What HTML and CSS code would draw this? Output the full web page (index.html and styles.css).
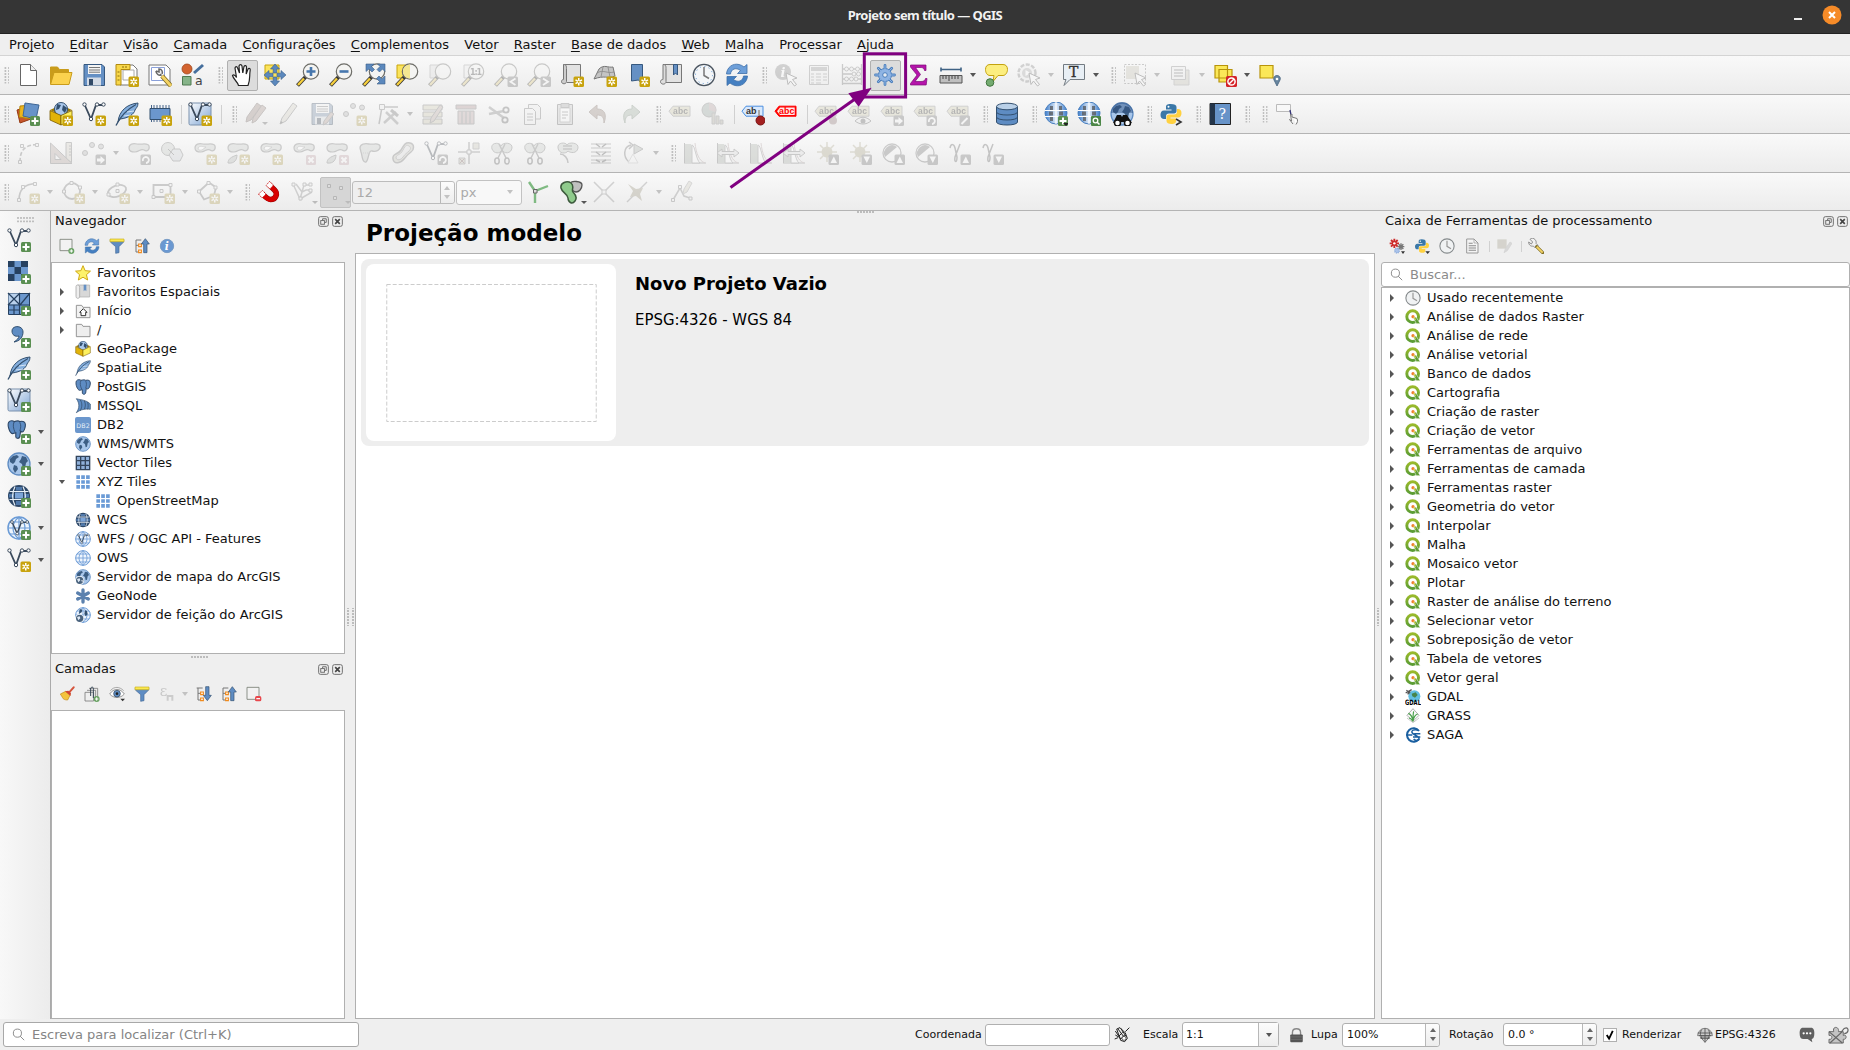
FILE: index.html
```html
<!DOCTYPE html>
<html lang="pt-BR">
<head>
<meta charset="utf-8">
<title>Projeto sem título — QGIS</title>
<link rel="stylesheet" href="styles.css">
</head>
<body>
<svg class="defs" aria-hidden="true">
<defs>
<linearGradient id="gy" x1="0" y1="0" x2="0" y2="1"><stop offset="0" stop-color="#9aba2c"/><stop offset="1" stop-color="#5a9c34"/></linearGradient>
<linearGradient id="gb" x1="0" y1="0" x2="1" y2="1"><stop offset="0" stop-color="#fff"/><stop offset="1" stop-color="#7fa5d4"/></linearGradient>
<linearGradient id="gg" x1="0" x2="1"><stop offset="0" stop-color="#3d7cc9"/><stop offset=".5" stop-color="#e4eefa"/><stop offset="1" stop-color="#3d7cc9"/></linearGradient>
<g id="b-new"><rect x="13.5" y="13.5" width="10.5" height="10.5" rx="1.5" fill="#c8a30e"/><path d="M18.750 15v7.500M15.500 16.900l6.500 3.700M15.500 20.600l6.500-3.700" stroke="#fff" stroke-width="1.500"/><circle cx="18.750" cy="18.750" r="1" fill="#c8a30e"/></g>
<g id="b-add"><rect x="14" y="14" width="10" height="10" rx="1.500" fill="#5a8f52"/><path d="M19 15.500v7M15.500 19h7" stroke="#fff" stroke-width="2"/></g>
<g id="b-del"><rect x="14" y="14" width="10" height="10" rx="1.500" fill="#d8a0aa"/><path d="M16.500 16.500l5 5M21.500 16.500l-5 5" stroke="#fff" stroke-width="2"/></g>
<g id="b-sq"><rect x="13.500" y="13.500" width="10.500" height="10.500" rx="1.500" fill="#777"/></g>
<g id="b-right"><use href="#b-sq"/><path d="M15 17.500h3.500v-2.500l4.500 4-4.500 4v-2.500h-3.500z" fill="#fff"/></g>
<g id="b-rot"><use href="#b-sq"/><path d="M16 20a3 3 0 1 1 3 2" fill="none" stroke="#fff" stroke-width="1.800"/></g>
<g id="b-up"><use href="#b-sq"/><path d="M15.500 22l3.300-6.500 3.200 6.500z" fill="#fff"/></g>
<g id="b-down"><use href="#b-sq"/><path d="M15.500 15.500l3.300 6.500 3.200-6.500z" fill="#fff"/></g>
<g id="lens"><path d="M9.500 14l-8 8.500" stroke="#333" stroke-width="4"/><path d="M8 15.500l-6 6.500" stroke="#f6cf3d" stroke-width="2.400"/><circle cx="15" cy="8.500" r="7.700" fill="#f4f4f2" fill-opacity=".9" stroke="#6d6d68" stroke-width="1.200"/></g>
<g id="nodes-v"><path d="M2.500 2.500L9 17l5-14h7" fill="none" stroke="#3b4a5c" stroke-width="1.800"/><g fill="#fff" stroke="#3b4a5c"><circle cx="2.500" cy="2.500" r="1.700"/><circle cx="9" cy="17" r="1.700"/><circle cx="15" cy="2.500" r="1.700"/><circle cx="21.500" cy="2.500" r="1.700"/></g></g>
<g id="globe"><circle cx="12" cy="12" r="11" fill="#a8c6ea" stroke="#5f8cc2" stroke-width="1.300"/><path d="M3 7l3-3 4-1 2 2-3 2-1 3-2 2-3-2zM15 4l4 1 2 4-2 2-1 5-2 1-1-5-3-2 2-3zM7 13l3 1 1 3-3 4-2-4z" fill="#3c5e84"/></g>
<g id="globe-lines"><circle cx="12" cy="12" r="11" fill="#eef5fd" stroke="#6b9bd6" stroke-width="1.500"/><path d="M1 12h22M3 6h18M3 18h18M12 1v22M12 1c-8 6-8 16 0 22c8-6 8-16 0-22" fill="none" stroke="#6b9bd6" stroke-width="1.200"/></g>
<g id="globe-dark"><circle cx="12" cy="12" r="11" fill="#2d4767"/><path d="M8 8.500h8v6H8z" fill="#7ba4d8"/><path d="M2 10h5v3.500H2zM17 10h5v3.500h-5zM9 3h6v3.500H9zM9 17h6v4H9z" fill="#5079ab"/><path d="M2.500 7.500h19M2.500 15.500h19M8 2.500c-3 6-3 13 0 19M16 2.500c3 6 3 13 0 19" fill="none" stroke="#e8f0f8" stroke-width="1.200"/></g>
<g id="tag"><path d="M1 9.200l4-5h17v10H5z"/></g>
<g id="blob"><path d="M2 7c0-4 4-5 8-4s11-2 12 2-2 6-5 4-5 2-9 2-6-1-6-4z" fill="#c5cdc5" stroke="#777" stroke-width="1.200"/></g>
<g id="cursor"><path d="M12 10l11 5-4.500 1.500 4 5-2 1.500-4-5-2.500 3.500z" fill="#fff" stroke="#555"/></g>

<symbol id="new" viewBox="0 0 24 24"><path d="M4.500 1.500h10l6 6v15h-16z" fill="#fff" stroke="#666"/><path d="M14.500 1.500v6h6" fill="#eee" stroke="#666"/></symbol>
<symbol id="open" viewBox="0 0 24 24"><path d="M1.500 21V4h7l2 2.500h9V9" fill="#c99c1b" stroke="#c99c1b"/><path d="M1.500 21.500l3.500-12h18l-3 12z" fill="#fbd24e" stroke="#c99c1b"/></symbol>
<symbol id="save" viewBox="0 0 24 24"><path d="M2 1.500h18l2.500 2.500v18.500H2z" fill="#6590c4" stroke="#36587f"/><path d="M6 2h13v9H6z" fill="#f4f4f4"/><path d="M7 4.500h11M7 7h11M7 9.200h11" stroke="#777"/><path d="M5 14.500h14v8H5z" fill="#d5dce6"/><path d="M7 16h4v6H7z" fill="#324a67"/></symbol>
<symbol id="layout" viewBox="0 0 24 24"><path d="M5 2h13l4 4v16H5z" fill="#fff" stroke="#777"/><path d="M8 7h11v10H8z" fill="none" stroke="#aaa"/><path d="M1 1.500h14v5H6V22H1z" fill="#f8d749" stroke="#b18a10"/><path d="M8 3v2M11 3v2M2.500 9h2M2.500 13h2M2.500 17h2" stroke="#8a6d10"/><use href="#b-new"/></symbol>
<symbol id="layoutm" viewBox="0 0 24 24"><path d="M1 2h17l4 4v16H1z" fill="#fff" stroke="#777"/><path d="M3.500 4.500h13v13h-13z" fill="none" stroke="#8aa0da"/><path d="M8 8c0 3 3 5 5 4l-1-1M8 8l3 1V6c3 0 4 3 3 5" fill="#eee" stroke="#666" stroke-width="1.500"/><path d="M14 13l9 10" stroke="#776622" stroke-width="4.500"/><path d="M14 13l9 10" stroke="#f3d264" stroke-width="3"/></symbol>
<symbol id="style" viewBox="0 0 24 24"><circle cx="6" cy="6" r="5" fill="#d3632f" stroke="#a0461c" stroke-width=".8"/><path d="M13 10l9-8" stroke="#466f9d" stroke-width="3"/><path d="M1.500 13.500h8.500v8.500H1.500z" fill="#86b489" stroke="#4e7a51"/><text x="14" y="21.500" font-family="DejaVu Sans" font-size="12.500" fill="#444">a</text></symbol>
<symbol id="hand" viewBox="0 0 24 24"><path d="M8.500 22.500c-1-4-5-6-6-10 1-1.500 3 0 4 2L5 5c.5-1.800 2-1.800 2.600 0L9.500 10 9 3c.5-1.800 2.500-1.800 3 0l.8 7L14 3.500c.8-1.500 2.500-1 2.500.5L16.200 11l1.800-5c1-1.200 2.500-.5 2.200 1-1 6 .3 10-2.200 15.500z" fill="#fff" stroke="#222" stroke-width="1.200"/></symbol>
<symbol id="move" viewBox="0 0 24 24"><path d="M2 2h14v14H2z" fill="#fbe45c" stroke="#c9a50c"/><g fill="#5b88bd" stroke="#3c5f88" stroke-width=".6"><path d="M12 1l4.500 5h-2.700v4h-3.600V6H7.500z"/><path d="M12 23l4.500-5h-2.700v-4h-3.600v4H7.500z"/><path d="M1 12l5-4.500v2.700h4v3.600H6v2.700z"/><path d="M23 12l-5-4.500v2.700h-4v3.600h4v2.700z"/></g></symbol>
<symbol id="zin" viewBox="0 0 24 24"><use href="#lens"/><path d="M15 4v9M10.500 8.500h9" stroke="#4777ad" stroke-width="2.600"/></symbol>
<symbol id="zout" viewBox="0 0 24 24"><use href="#lens"/><path d="M10.500 8.500h9" stroke="#4777ad" stroke-width="2.600"/></symbol>
<symbol id="zfull" viewBox="0 0 24 24"><use href="#lens"/><g fill="#5b88bd" stroke="#3c5f88" stroke-width=".6"><path d="M4 1h8l-2.500 2.500 3 3-2.500 2.500-3-3L4 8.500z"/><path d="M23 1h-7.500l2.500 2.500-3 3 2.500 2.500 3-3L23 8.500z"/><path d="M23 21h-8l2.500-2.500-3-3 2.500-2.500 3 3L23 13z"/></g></symbol>
<symbol id="zsel" viewBox="0 0 24 24"><path d="M2 2h12v13H2z" fill="#fbe45c" stroke="#c9a50c"/><use href="#lens"/><path d="M15 1.500a7 7 0 0 0 0 14z" fill="#f3e690"/></symbol>
<symbol id="zlay" viewBox="0 0 24 24"><path d="M2 2h9v13H2z" fill="#ddd" stroke="#999"/><use href="#lens"/></symbol>
<symbol id="z11" viewBox="0 0 24 24"><path d="M3 2h9v13H3z" fill="#eee" stroke="#999"/><use href="#lens"/><text x="9" y="12" font-family="DejaVu Sans" font-weight="bold" font-size="8" textLength="12" fill="#444">1:1</text></symbol>
<symbol id="zlast" viewBox="0 0 24 24"><use href="#lens"/><use href="#b-sq"/><path d="M21.500 15.500l-5 3.300 5 3.200" fill="none" stroke="#fff" stroke-width="1.800"/></symbol>
<symbol id="znext" viewBox="0 0 24 24"><use href="#lens"/><use href="#b-sq"/><path d="M16 15.500l5 3.300-5 3.200" fill="none" stroke="#fff" stroke-width="1.800"/></symbol>
<symbol id="map" viewBox="0 0 24 24"><path d="M3.500 1.500h17v18H7" fill="#e2e2e2" stroke="#777"/><path d="M3.500 1.500c3 0 3 2 3 4v13c0 3-5 3-5 0 0-2 2-2 2-2z" fill="#ccc" stroke="#777"/><use href="#b-new"/></symbol>
<symbol id="map3d" viewBox="0 0 24 24"><path d="M6 6c5-5 9-1 14-2l2 9c-7 3-11-1-21 3z" fill="#c4c4c4" stroke="#777"/><path d="M4 10c6-4 10 1 17-1M10 4L8 14M15 4l2 10" fill="none" stroke="#888" stroke-width=".8"/><use href="#b-new"/></symbol>
<symbol id="bmnew" viewBox="0 0 24 24"><path d="M5.500 1.500h11v20l-4-4.500-7 1z" fill="#6590c4" stroke="#36587f"/><use href="#b-new"/></symbol>
<symbol id="bm" viewBox="0 0 24 24"><path d="M4 1.500h18.500v18H7" fill="#e2e2e2" stroke="#777"/><path d="M4 1.500c3 0 3 2 3 4v13c0 3.500-5.500 3.500-5.500 0 0-2 2.500-2 2.500-2z" fill="#ddd" stroke="#777"/><path d="M14.500 1.500h4V12l-2-2-2 2z" fill="#6590c4" stroke="#36587f"/></symbol>
<symbol id="clock" viewBox="0 0 24 24"><circle cx="12" cy="12" r="10.700" fill="#f4f6f8" stroke="#4b5560" stroke-width="1.300"/><circle cx="12" cy="12" r="8.500" fill="none" stroke="#6da0d5" stroke-dasharray="1.200 3.250"/><path d="M12 4v8.500l5 3" fill="none" stroke="#777" stroke-width="1.500"/></symbol>
<symbol id="clockg" viewBox="0 0 24 24"><circle cx="12" cy="12" r="10.700" fill="#f0f2f3" stroke="#858a8c" stroke-width="1.600"/><path d="M12 4v8.500l6 3.500" fill="none" stroke="#999" stroke-width="1.800"/></symbol>
<symbol id="refresh" viewBox="0 0 24 24"><path d="M1.500 11C2 4 8 0 14 1.500c2 .5 3.500 1.200 5 2.500l3-2.500v9h-9.500l3-3C11 4 6 6 5.500 11z" fill="#6d9fd9" stroke="#3e6fa8" stroke-width=".8"/><path d="M22.500 13C22 20 16 24 10 22.500c-2-.5-3.500-1.200-5-2.500l-3 2.500v-9h9.500l-3 3C13 20 18 18 18.500 13z" fill="#4580c2" stroke="#3e6fa8" stroke-width=".8"/></symbol>
<symbol id="ident" viewBox="0 0 24 24"><circle cx="9" cy="9" r="8" fill="#888"/><text x="6.500" y="14" font-family="DejaVu Serif" font-weight="bold" font-style="italic" font-size="13" fill="#fff">i</text><use href="#cursor"/></symbol>
<symbol id="table" viewBox="0 0 24 24"><path d="M2.500 2.500h19v19h-19z" fill="#eee" stroke="#888"/><path d="M4 4h16v4H4z" fill="#999"/><path d="M4 11h3M9 11h5M16 11h4M4 14h3M9 14h5M16 14h4M4 17h3M9 17h5M16 17h4M4 20h3M9 20h5" stroke="#888"/></symbol>
<symbol id="abacus" viewBox="0 0 24 24"><path d="M2.500 1v21M21.500 1v21M2 20.500h20M3 6h18M3 11h18M3 16h18" fill="none" stroke="#777" stroke-width="1.300"/><g fill="#eee" stroke="#777"><circle cx="6.500" cy="6" r="2"/><circle cx="11.500" cy="6" r="2"/><circle cx="17.500" cy="6" r="2"/><circle cx="14" cy="11" r="2"/><circle cx="18.500" cy="11" r="2"/><circle cx="6.500" cy="16" r="2"/><circle cx="11.500" cy="16" r="2"/><circle cx="16" cy="16" r="2"/></g></symbol>
<symbol id="gear" viewBox="0 0 24 24"><g stroke="#4d80bd" stroke-width="2.800" stroke-linecap="round"><path d="M12 2.500v19M2.500 12h19M5.300 5.300l13.400 13.400M18.700 5.300L5.300 18.700"/></g><circle cx="12" cy="12" r="6.500" fill="#8fb4e3" stroke="#4d80bd"/><g stroke="#8fb4e3" stroke-width="1" stroke-linecap="round"><path d="M12 2.500v19M2.500 12h19M5.300 5.300l13.400 13.400M18.700 5.300L5.300 18.700"/></g><circle cx="12" cy="12" r="2.300" fill="#e6ebf1" stroke="#4d80bd"/></symbol>
<symbol id="sum" viewBox="0 0 24 24"><path d="M4.500 2h15.500v5.500h-1.500C18 5 17 4.500 14 4.500H9.500l5 7-5.500 7h6c3 0 4-1 4.500-3H21l-.8 6.500H4.500v-1.500l6.500-8.500-6.500-8z" fill="#b514ab" stroke="#7d0877" stroke-width=".7"/></symbol>
<symbol id="ruler" viewBox="0 0 24 24"><path d="M2 6.500h20M2 4.500v4M22 4.500v4" stroke="#3f6284" stroke-width="1.600"/><path d="M1 12.500h22v7.500H1z" fill="#bfbfbf" stroke="#555"/><path d="M4 13v3M7 13v3M10 13v5M13 13v3M16 13v3M19 13v3" stroke="#444"/></symbol>
<symbol id="tip" viewBox="0 0 24 24"><path d="M6 1.500h13c3 0 4.500 2 4.500 5s-2 6-4.500 6h-5l-5 6 1-6H6c-3 0-4.500-3-4.500-6s1.500-5 4.500-5z" fill="#fcee7f" stroke="#c3a20f"/><circle cx="6" cy="19.500" r="3.800" fill="#74ab70" stroke="#41753f"/></symbol>
<symbol id="gearact" viewBox="0 0 24 24"><circle cx="10" cy="10" r="8.500" fill="#eee" stroke="#888" stroke-width="2.400" stroke-dasharray="4 1.500"/><circle cx="10" cy="10" r="5" fill="#aaa"/><path d="M8.500 7l5 3-5 3z" fill="#fff"/><use href="#cursor"/></symbol>
<symbol id="textann" viewBox="0 0 24 24"><path d="M1.500 1.500h21v15H8l-6 6 2-6H1.500z" fill="#e8eff5" stroke="#737b82"/><text x="7" y="14" font-family="DejaVu Serif" font-size="14" fill="#333" stroke="#333" stroke-width=".4">T</text></symbol>
<symbol id="select" viewBox="0 0 24 24"><path d="M1.500 1.500h21v19h-21z" fill="none" stroke="#777" stroke-dasharray="2 1.500"/><path d="M3 3h13v13H3z" fill="#c9c3a8"/><use href="#cursor"/></symbol>
<symbol id="form" viewBox="0 0 24 24"><path d="M6 7h15v15H6z" fill="#ccc7b0" stroke="#999"/><path d="M3.500 3.500h14v13h-14z" fill="#eee" stroke="#888"/><path d="M6 7h9M6 10h9M6 13h9" stroke="#888" stroke-width="1.300"/></symbol>
<symbol id="desel" viewBox="0 0 24 24"><path d="M2 2.500h12.500V15H2zM6 6.500h13V19H6z" fill="#fbe858" stroke="#b8940b" stroke-width="1.200"/><rect x="13" y="13" width="11" height="11" rx="1.500" fill="#d42328"/><circle cx="18.500" cy="18.500" r="3.600" fill="none" stroke="#fff" stroke-width="1.500"/><path d="M16 21l5-5" stroke="#fff" stroke-width="1.500"/></symbol>
<symbol id="selloc" viewBox="0 0 24 24"><path d="M2 2.500h13V15H2z" fill="#fbe858" stroke="#b8940b" stroke-width="1.200"/><path d="M19 23l-3-6c-1-3 1-4.500 3-4.500s4 1.500 3 4.500z" fill="#67859f" stroke="#45627d" stroke-width=".8"/><circle cx="19" cy="16" r="1.300" fill="#fff"/></symbol>

<symbol id="dsm" viewBox="0 0 24 24"><path d="M1 8l11-3 3 12-11 4z" fill="#c7562c" stroke="#96380f"/><path d="M4 4l12-1-1 14-12-2z" fill="#edb51d" stroke="#b1830c"/><path d="M9 1l14 2-3 14-13-3z" fill="#6793c8" stroke="#3f6695"/><use href="#b-add"/></symbol>
<symbol id="gpkg" viewBox="0 0 24 24"><path d="M1 8l11-5 11 5-11 5z" fill="#a07c05"/><circle cx="12" cy="7" r="6.500" fill="#aac8ec" stroke="#33506f"/><path d="M8 2l4 1-2 4-3 1zM14 3l4 3-2 5-3-3z" fill="#33506f"/><path d="M1 8.500l11 5V23L1 18z" fill="#e1b309" stroke="#7a5c00" stroke-width=".8"/><path d="M23 8.500l-11 5V23l11-5z" fill="#fdf05e" stroke="#7a5c00" stroke-width=".8"/></symbol>
<symbol id="gpkgn" viewBox="0 0 24 24"><use href="#gpkg"/><use href="#b-new"/></symbol>
<symbol id="shpn" viewBox="0 0 24 24"><use href="#nodes-v"/><use href="#b-new"/></symbol>
<symbol id="shpa" viewBox="0 0 24 24"><use href="#nodes-v"/><use href="#b-add"/></symbol>
<symbol id="feather" viewBox="0 0 24 24"><path d="M3 20C4 9 12 2 23 1c0 4-2 5-3 7-1 4-6 8-15 9z" fill="#84aedd" stroke="#33506f"/><path d="M1 23.500C5 15 11 8 21 2.500" fill="none" stroke="#33506f" stroke-width="1.300"/><path d="M9 14l7-1M12 10l7-1" stroke="#d5e4f5"/></symbol>
<symbol id="feathern" viewBox="0 0 24 24"><use href="#feather"/><use href="#b-new"/></symbol>
<symbol id="feathera" viewBox="0 0 24 24"><use href="#feather"/><use href="#b-add"/></symbol>
<symbol id="chip" viewBox="0 0 24 24"><path d="M6 3v17M9 3v17M12 3v17M15 3v17M18 3v17M21 3v17M3.500 3v17" stroke="#46648a" stroke-width="1"/><path d="M2 6.500h20v11H2z" fill="#6b97cd" stroke="#33506f"/><use href="#b-new"/></symbol>
<symbol id="virt" viewBox="0 0 24 24"><rect x="1" y="1" width="22" height="22" rx="1.500" fill="url(#gb)" stroke="#7a91ad"/><g><use href="#nodes-v"/></g></symbol>
<symbol id="virtn" viewBox="0 0 24 24"><use href="#virt"/><use href="#b-new"/></symbol>
<symbol id="virta" viewBox="0 0 24 24"><use href="#virt"/><use href="#b-add"/></symbol>
<symbol id="pencils" viewBox="0 0 24 24"><path d="M2 20l1-5L13 1l4 3L7 18z" fill="#a98678" stroke="#7c655d"/><path d="M8 21l1-5L18 3l4 3-10 13z" fill="#b99384" stroke="#7c655d"/><path d="M18 20h6l-3 3z" fill="#666"/></symbol>
<symbol id="pencil" viewBox="0 0 24 24"><path d="M3 22l2-6L16 1l4 3L9 19z" fill="#d9d2bd" stroke="#777"/><path d="M3 22l1-3 2 1.500z" fill="#555"/></symbol>
<symbol id="saveed" viewBox="0 0 24 24"><use href="#save"/><path d="M13 23l1-4 7-9 3 2-7 9z" fill="#c79f90" stroke="#777"/></symbol>
<symbol id="pts" viewBox="0 0 24 24"><g fill="#bbb" stroke="#777"><circle cx="3" cy="12" r="2.500"/><circle cx="10" cy="4" r="2.500"/><circle cx="19" cy="5.500" r="2.500"/></g></symbol>
<symbol id="ptsn" viewBox="0 0 24 24"><use href="#pts"/><use href="#b-new"/></symbol>
<symbol id="ptsm" viewBox="0 0 24 24"><use href="#pts"/><use href="#b-right"/></symbol>
<symbol id="vertex" viewBox="0 0 24 24"><path d="M3 22L6 5h16" fill="none" stroke="#777" stroke-width="1.500"/><path d="M3.500 2.500h5v5h-5z" fill="#eee" stroke="#777"/><path d="M10 10l12 12M20 10L8 21" stroke="#888" stroke-width="2.500"/><path d="M15 8l7 6" stroke="#777" stroke-width="3"/></symbol>
<symbol id="attr" viewBox="0 0 24 24"><path d="M2 3h19v5H2zM2 10h19v5H2zM2 17h19v5H2z" fill="#d3cc9d" stroke="#777"/><path d="M9 21l1-5 9-13 3 2-9 14z" fill="#c7a99e" stroke="#777"/></symbol>
<symbol id="trash" viewBox="0 0 24 24"><path d="M2 3h20v4H2z" fill="#c08f8f" stroke="#777"/><path d="M4 9h16v13H4z" fill="#cfa5a5" stroke="#777"/><path d="M8 9v13M12 9v13M16 9v13" stroke="#888" stroke-width="1.500"/></symbol>
<symbol id="cut" viewBox="0 0 24 24"><path d="M2 5l15 11M2 12l15-3" stroke="#888" stroke-width="2.500"/><g fill="none" stroke="#666" stroke-width="1.800"><circle cx="19" cy="8" r="2.700"/><circle cx="18" cy="18" r="2.700"/></g></symbol>
<symbol id="copy" viewBox="0 0 24 24"><path d="M8.500 2.500h9l3 3V17h-12z" fill="#eee" stroke="#777"/><path d="M4.500 6.500h8l3 3v13h-11z" fill="#f4f4f4" stroke="#777"/><path d="M7 12h6M7 15h6M7 18h6" stroke="#777"/></symbol>
<symbol id="paste" viewBox="0 0 24 24"><path d="M4.500 2.500h15v20h-15z" fill="#ccc" stroke="#666"/><path d="M7 6h10v14H7z" fill="#fff" stroke="#999"/><path d="M8 1.500h8v4H8z" fill="#aaa" stroke="#777"/><path d="M9 10h6M9 13h6M9 16h4" stroke="#777"/></symbol>
<symbol id="undo" viewBox="0 0 24 24"><path d="M3 10l8-7v4c8 0 10 6 7 14 0-6-2-8-7-8v4z" fill="#a88876" stroke="#8a6a58"/></symbol>
<symbol id="redo" viewBox="0 0 24 24"><path d="M21 10l-8-7v4c-8 0-10 6-7 14 0-6 2-8 7-8v4z" fill="#9ab59a" stroke="#729072"/></symbol>
<symbol id="abc" viewBox="0 0 24 24"><g fill="#d6cd92" stroke="#888"><use href="#tag"/></g><text x="5" y="12.200" font-family="Liberation Sans" font-weight="bold" font-size="8.500" textLength="15" fill="#333">abc</text></symbol>
<symbol id="abcr" viewBox="0 0 24 24"><g fill="#f00" stroke="#f00"><use href="#tag"/></g><path d="M3 9.200l3-3.700h14.700v7.500H6z" fill="#ffeaea"/><text x="5" y="12.300" font-family="Liberation Sans" font-weight="bold" font-size="8.800" textLength="15.500" fill="#f00">abc</text></symbol>
<symbol id="abpin" viewBox="0 0 24 24"><g fill="#d9e9fd" stroke="#4a8fe0"><use href="#tag"/></g><text x="5" y="12.300" font-family="Liberation Sans" font-weight="bold" font-size="9" fill="#333">ab</text><path d="M18 8v9" stroke="#aaa" stroke-width="2"/><circle cx="19.500" cy="18.500" r="4.500" fill="#a32020" stroke="#7a1414"/></symbol>
<symbol id="abpin2" viewBox="0 0 24 24"><use href="#abc"/><circle cx="19" cy="18.500" r="4" fill="#a87878"/></symbol>
<symbol id="abeye" viewBox="0 0 24 24"><use href="#abc"/><path d="M8 19c5-5 11-5 16 0-5 4-11 4-16 0z" fill="#eee" stroke="#666"/><circle cx="16" cy="19" r="2.500" fill="#666"/></symbol>
<symbol id="abmove" viewBox="0 0 24 24"><use href="#abc"/><use href="#b-right"/></symbol>
<symbol id="abrot" viewBox="0 0 24 24"><use href="#abc"/><use href="#b-rot"/></symbol>
<symbol id="abedit" viewBox="0 0 24 24"><use href="#abc"/><use href="#b-sq"/><path d="M15.500 22l6-6" stroke="#fff" stroke-width="2"/></symbol>
<symbol id="pie" viewBox="0 0 24 24"><circle cx="8" cy="8" r="7" fill="#8fa89c" stroke="#777"/><path d="M8 8V1a7 7 0 0 1 6.500 9z" fill="#c49a9a"/><path d="M11 11h3v11h-3zM15 14h3v8h-3zM19 18h3v4h-3z" fill="#b4ae96" stroke="#888"/></symbol>
<symbol id="db" viewBox="0 0 24 24"><path d="M1.500 5v15c0 4 21 4 21 0V5z" fill="#5e8cc3" stroke="#33506f"/><ellipse cx="12" cy="4.500" rx="10.500" ry="3.300" fill="#b9d0e8" stroke="#33506f"/><path d="M1.500 10c0 4 21 4 21 0M1.500 15c0 4 21 4 21 0" fill="none" stroke="#33506f"/></symbol>
<symbol id="csw" viewBox="0 0 24 24"><circle cx="12" cy="11" r="11" fill="url(#gg)" stroke="#4a80bf"/><path d="M6 4h3v4H6zM15 4h3v4h-3zM5 9.500h4v4H5zM15 9.500h4v4h-4zM6 15h3v4H6zM15 15h3v4h-3z" fill="#555" opacity=".75"/><path d="M12 0v22M1 8.500h22M1 14.500h22" stroke="#fff"/></symbol>
<symbol id="cswa" viewBox="0 0 24 24"><use href="#csw"/><use href="#b-add"/><path d="M19 21h6l-3 3z" fill="#222"/></symbol>
<symbol id="csws" viewBox="0 0 24 24"><use href="#csw"/><rect x="14" y="14" width="10" height="10" rx="1" fill="#4d8748"/><circle cx="18.500" cy="18.500" r="2.300" fill="none" stroke="#fff" stroke-width="1.300"/><path d="M20 20l2.500 2.500" stroke="#fff" stroke-width="1.500"/></symbol>
<symbol id="bino" viewBox="0 0 24 24"><use href="#globe"/><path d="M1 11a11 11 0 0 1 22 0z" fill="#2f5080" opacity=".45"/><path d="M7 13h4l1 2 1-2h4l5 8-8-1h-4l-7 1z" fill="#111"/><circle cx="7.500" cy="21" r="3" fill="#fff" stroke="#111" stroke-width="1.500"/><circle cx="17.500" cy="21" r="3" fill="#fff" stroke="#111" stroke-width="1.500"/></symbol>
<symbol id="py" viewBox="0 0 24 24"><path d="M11.500 2C8 2 7 3 7 5v2.500h5.500v1H5c-2.500 0-3.500 2-3.500 4.500S3 17 5 17h2v-2.500c0-2 1-3 3-3h5c1.500 0 2.500-1 2.500-2.500V5c0-2-2-3-6-3z" fill="#3b78a8"/><path d="M12.500 22c3.500 0 4.500-1 4.500-3v-2.500h-5.500v-1H19c2.500 0 3.500-2 3.500-4.500S21 7 19 7h-1v2.500c0 2-1 3-3 3h-5c-1.500 0-2.500 1-2.500 2.500V19c0 2 2 3 5 3z" fill="#ffd140"/><circle cx="9.500" cy="4.700" r="1" fill="#fff"/></symbol>
<symbol id="pyc" viewBox="0 0 24 24"><use href="#py"/><path d="M17 17l5 3-5 3" fill="none" stroke="#333" stroke-width="1.600"/></symbol>
<symbol id="help" viewBox="0 0 24 24"><path d="M2 1.500h20.500v21H2z" fill="#6793c8" stroke="#222"/><path d="M2 1.500h5v21H2z" fill="#24354a"/><text x="10.500" y="16.500" font-family="DejaVu Serif" font-size="14" fill="#fff">?</text></symbol>
<symbol id="touch" viewBox="0 0 24 24"><path d="M1.500 2.500h14v7h-14z" fill="#f8f8f8" stroke="#bbb"/><path d="M15 8l1 5" stroke="#337" stroke-width="1.300"/><path d="M15.500 12l1 7-2-1.500 3.500 4.500M17 12v3l5 1.500c1 2 .5 4-1 6" fill="#fff" stroke="#777"/></symbol>

<symbol id="curve" viewBox="0 0 24 24"><path d="M4 21C4 10 8 4 21 3.500" fill="none" stroke="#777" stroke-width="1.600" stroke-dasharray="4 2"/><path d="M2.500 19.500h3v3h-3zM4.500 3.500h3v3h-3zM19.500 2.500h3v3h-3z" fill="#eee" stroke="#777"/></symbol>
<symbol id="curven" viewBox="0 0 24 24"><path d="M3 20C3 10 8 4 20 3.500" fill="none" stroke="#777" stroke-width="1.600"/><path d="M1.500 18.500h3v3h-3zM5.500 5.500h3v3h-3zM17.500 2.500h3v3h-3z" fill="#eee" stroke="#777"/><use href="#b-new"/></symbol>
<symbol id="setsq" viewBox="0 0 24 24"><path d="M17 1.500h5.500v20L17 18z" fill="#d6cfbb" stroke="#777"/><path d="M1.500 2L23 22.500H1.500z" fill="#c2a79c" stroke="#777"/><path d="M6 12.500l6 6H6z" fill="#f4f4f4" stroke="#777"/><path d="M20 5h2M20 8h2M20 11h2M20 14h2" stroke="#777"/></symbol>
<symbol id="frot" viewBox="0 0 24 24"><use href="#blob"/><use href="#b-rot"/></symbol>
<symbol id="simp" viewBox="0 0 24 24"><circle cx="8" cy="8" r="6.500" fill="#c5cdc5" stroke="#777"/><path d="M13 8h7l3 6-3 6h-7l-4-6z" fill="#cdd6dd" stroke="#777"/><path d="M8 8l6 6" stroke="#666"/></symbol>
<symbol id="ring" viewBox="0 0 24 24"><use href="#blob"/><path d="M5 7c2-3 5-1 8-1l-4 3c-2 .5-4 0-4-2z" fill="#fff" stroke="#888" stroke-width=".8"/></symbol>
<symbol id="ringn" viewBox="0 0 24 24"><use href="#ring"/><use href="#b-new"/></symbol>
<symbol id="ringd" viewBox="0 0 24 24"><use href="#ring"/><use href="#b-del"/></symbol>
<symbol id="part" viewBox="0 0 24 24"><use href="#blob"/><path d="M2 22c0-4 3-6 9-8 0 4-2 9-9 8z" fill="#b8c0b8" stroke="#777"/></symbol>
<symbol id="partn" viewBox="0 0 24 24"><use href="#part"/><use href="#b-new"/></symbol>
<symbol id="partd" viewBox="0 0 24 24"><use href="#part"/><use href="#b-del"/></symbol>
<symbol id="reshape" viewBox="0 0 24 24"><path d="M2 7c0-4 5-5 9-4s10-2 11 2-4 6-8 5-3 9-6 11c-4 1-4-8-5-10z" fill="#c5cdc5" stroke="#777" stroke-width="1.300"/><path d="M5 12h7" stroke="#999" stroke-dasharray="1 1"/></symbol>
<symbol id="offset" viewBox="0 0 24 24"><path d="M2 18c-1-6 5-4 8-9s4-8 9-7 4 7 1 9-4 3-7 7-10 6-11 0z" fill="#c9c7b3" stroke="#777" stroke-width="1.500"/><path d="M5 17c0-4 4-2 7-8s4-5 6-4 2 3 0 5-4 3-6 6-6 4-7 1z" fill="#ddd" stroke="#888"/></symbol>
<symbol id="vrot" viewBox="0 0 24 24"><use href="#nodes-v"/><use href="#b-rot"/></symbol>
<symbol id="trim" viewBox="0 0 24 24"><path d="M12 1v22M1 11h22" stroke="#888" stroke-width="1.600"/><path d="M10 9h4v4h-4z" fill="#eee" stroke="#777"/><path d="M16 2h6v6h-6zM2 17h6v6H2z" fill="#ccc8ac" stroke="#888"/><path d="M2.500 17.500l5 5M7.500 17.500l-5 5" stroke="#966"/></symbol>
<symbol id="scis" viewBox="0 0 24 24"><path d="M2 8c-2-7 8-7 9-3 1-4 12-4 11 2s-8 6-10 2c-2 4-8 4-10-1z" fill="#c5cdc5" stroke="#777"/><path d="M8 17l7-14M16 17L9 3" stroke="#777" stroke-width="1.500"/><g fill="none" stroke="#666" stroke-width="1.500"><ellipse cx="7" cy="20" rx="2.200" ry="3"/><ellipse cx="17" cy="20" rx="2.200" ry="3"/></g></symbol>
<symbol id="merge" viewBox="0 0 24 24"><path d="M2 7c-1-6 8-6 9-3 1-3 12-3 11 3s-8 5-10 3c-2 3-9 3-10-3z" fill="#c5cdc5" stroke="#777"/><path d="M7 5h9M7 8h9M4 13c4 0 8 4 8 9" fill="none" stroke="#777" stroke-width="1.500"/></symbol>
<symbol id="mattr" viewBox="0 0 24 24"><path d="M2 3h20M2 7h20M2 11h20M2 15h20M2 19h20M2 22h20" stroke="#777" stroke-width="1.200"/><path d="M7 3l4 3M17 3l-4 3M7 11l4 3M17 11l-4 3M7 19l4 2M17 19l-4 2" stroke="#555" stroke-width="1.500"/></symbol>
<symbol id="rsym" viewBox="0 0 24 24"><path d="M7 21C1 16 1 6 9 4" fill="none" stroke="#777" stroke-width="1.500"/><path d="M7 1l4 3-4 4" fill="none" stroke="#777" stroke-width="1.500"/><path d="M12 3l9 5-9 5z" fill="#aab5aa" stroke="#777"/><path d="M6 22l5-9 5 9z" fill="#f8f8f8" stroke="#bbb"/></symbol>
<symbol id="hist" viewBox="0 0 24 24"><path d="M1.500 2v20M1 22h22" stroke="#777"/><path d="M2 22V3l6 0c3 4 2 14 4 19z" fill="#a9b5a4"/><path d="M9 22V4c3 0 4 15 8 18z" fill="#fff" stroke="#888"/><path d="M12 2c1 10 4 18 10 20" fill="none" stroke="#b99"/></symbol>
<symbol id="hista" viewBox="0 0 24 24"><use href="#hist"/><path d="M1 12l5-4v2.500h12V8l5 4-5 4v-2.500H6V16z" fill="#ddd" stroke="#777"/></symbol>
<symbol id="sunu" viewBox="0 0 24 24"><path d="M12 1v20M2 11h20M5 4l14 14M19 4L5 18" stroke="#b8ad7d" stroke-width="1.500"/><circle cx="12" cy="11" r="5.500" fill="#b3a870"/><use href="#b-up"/></symbol>
<symbol id="sund" viewBox="0 0 24 24"><path d="M12 1v20M2 11h20M5 4l14 14M19 4L5 18" stroke="#b8ad7d" stroke-width="1.500"/><circle cx="12" cy="11" r="5.500" fill="#b3a870"/><use href="#b-down"/></symbol>
<symbol id="conu" viewBox="0 0 24 24"><circle cx="11" cy="12" r="9" fill="#f8f8f8" stroke="#777" stroke-width="1.300"/><path d="M4 16a8 8 0 0 1 12-10z" fill="#777"/><use href="#b-up"/></symbol>
<symbol id="cond" viewBox="0 0 24 24"><circle cx="11" cy="12" r="9" fill="#f8f8f8" stroke="#777" stroke-width="1.300"/><path d="M4 16a8 8 0 0 1 12-10z" fill="#777"/><use href="#b-down"/></symbol>
<symbol id="gamu" viewBox="0 0 24 24"><path d="M3 7c1-5 4-4 5 0l2 9c0 6-3 6-2 0l5-13" fill="none" stroke="#666" stroke-width="1.500"/><use href="#b-up"/></symbol>
<symbol id="gamd" viewBox="0 0 24 24"><path d="M3 7c1-5 4-4 5 0l2 9c0 6-3 6-2 0l5-13" fill="none" stroke="#666" stroke-width="1.500"/><use href="#b-down"/></symbol>

<symbol id="circn" viewBox="0 0 24 24"><circle cx="11" cy="11" r="8" fill="none" stroke="#777" stroke-width="1.800"/><path d="M9 1.500h3v3H9zM1.500 10h3v3h-3zM17.500 6h3v3h-3z" fill="#eee" stroke="#777"/><use href="#b-new"/></symbol>
<symbol id="elln" viewBox="0 0 24 24"><ellipse cx="11" cy="11" rx="9.500" ry="5.500" fill="none" stroke="#777" stroke-width="1.800" transform="rotate(-20 11 11)"/><path d="M10 9.500h3v3h-3zM10 3h3v3h-3zM1 13h3v3H1z" fill="#eee" stroke="#777"/><use href="#b-new"/></symbol>
<symbol id="rectn" viewBox="0 0 24 24"><path d="M2.500 5h17v12h-17z" fill="none" stroke="#777" stroke-width="1.800"/><path d="M9 9.500h3v3H9zM18 3.500h3v3h-3zM1 15.500h3v3H1z" fill="#eee" stroke="#777"/><use href="#b-new"/></symbol>
<symbol id="polyn" viewBox="0 0 24 24"><path d="M13 2.500l7 5-2 8-10 4-5-8z" fill="none" stroke="#777" stroke-width="1.800"/><path d="M11 1.500h3v3h-3zM1.500 10h3v3h-3zM18 6h3v3h-3z" fill="#eee" stroke="#777"/><use href="#b-new"/></symbol>
<symbol id="magnet" viewBox="0 0 24 24"><path d="M12 4.500l5.500 5.500c4 4 1 9.500-4 9.500-3 0-5.500-3-8.500-6" fill="none" stroke="#940000" stroke-width="5.500"/><path d="M12 4.500l5.500 5.500c4 4 1 9.500-4 9.500-3 0-5.500-3-8.500-6" fill="none" stroke="#d80000" stroke-width="4.500"/><path d="M12.500 1.500l4 3.500-3.500 4-4-3.500zM1.500 14l4-3.500 3.500 3.500-4 4z" fill="#fff" stroke="#c22" stroke-width="1" stroke-dasharray="1.500 1"/></symbol>
<symbol id="snapv" viewBox="0 0 24 24"><path d="M3 4l7 15 4-14h8M6 4l6 8 4-2h5M10 19l12-7" fill="none" stroke="#888" stroke-width="1.500"/><path d="M2 3h3v3H2zM13 3h3v3h-3zM19 3h3v3h-3zM9 17h3v3H9zM19 9h3v3h-3z" fill="#eee" stroke="#777"/></symbol>
<symbol id="snapp" viewBox="0 0 24 24"><path d="M4.500 4.500h3v3h-3zM16.500 6.500h3v3h-3zM10.500 16.500h3v3h-3z" fill="#eee" stroke="#777"/></symbol>
<symbol id="topo" viewBox="0 0 24 24"><path d="M3 2l6 9 13-5M9 11v12" fill="none" stroke="#7fba82" stroke-width="2.400"/><path d="M7.500 9.500h3.500v3.500H7.500z" fill="#ddd" stroke="#666"/></symbol>
<symbol id="overlap" viewBox="0 0 24 24"><path d="M11 4c1-4 12-3 12 1s-3 7-6 7-7-5-6-8z" fill="#c0c0c0" stroke="#555" stroke-width="1.300"/><path d="M2 8c-1-5 6-8 10-5s0 7 2 9 5 5 2 9-7 1-7-3-6-5-7-10z" fill="#8fcb8c" stroke="#3d5a3d" stroke-width="1.500"/></symbol>
<symbol id="inter" viewBox="0 0 24 24"><path d="M2 2l20 20M22 2L2 22" stroke="#888" stroke-width="1.600"/><path d="M10 10h4v4h-4z" fill="#eee" stroke="#888"/></symbol>
<symbol id="self" viewBox="0 0 24 24"><path d="M2 22L22 2" stroke="#888" stroke-width="1.500"/><path d="M3 4l8 5 7-1-3 6 2 7-6-5-6 1 3-6z" fill="#a0946a"/></symbol>
<symbol id="tracep" viewBox="0 0 24 24"><path d="M3 20l7-12 4 8 6 2" fill="none" stroke="#888" stroke-width="1.600"/><path d="M1.500 18.500h3v3h-3zM8.500 5.500h3v3h-3zM19 17h3v3h-3z" fill="#eee" stroke="#777"/><path d="M13 14l1-5 5-8 3 2-5 9z" fill="#d4cdb1" stroke="#999"/></symbol>

<symbol id="raster" viewBox="0 0 24 24"><path d="M1 1h20v20H1z" fill="#6b97cd"/><path d="M1 1h6.500v6H1zM14 1h7v6h-7zM7.500 7H14v7H7.500zM1 14h6.500v7H1zM14 14h7v7h-7z" fill="#26405f"/><use href="#b-add"/></symbol>
<symbol id="mesh" viewBox="0 0 24 24"><path d="M1.500 1.500h21v21h-21z" fill="#6b97cd" stroke="#26405f"/><path d="M1.500 1.500h11v11h-11z" fill="#b9d1ec"/><path d="M12.500 1v21M1 13h22M1 1l12 12M13 1L1 13M13 13L23 1M7 13v10M1 18h12" stroke="#26405f" stroke-width="1.200"/><use href="#b-add"/></symbol>
<symbol id="comma" viewBox="0 0 24 24"><path d="M5 7c0-6 11-6 11 1 0 5-3 9-9 10 3-2 5-4 5-6-4 1-7-1-7-5z" fill="#5e8cc3" stroke="#33506f"/><use href="#b-add"/></symbol>
<symbol id="pg" viewBox="0 0 24 24"><path d="M2 3C4 0 8 1 9 2c3-1 6-1 7 0 4-1 7 0 7 4s-2 9-4 9l-2-1-1 7c-1 3-5 2-5 0v-5l-4 1C4 17 0 8 2 3z" fill="#5e8cc3" stroke="#2d4767" stroke-width="1.400"/><path d="M9 2c-2 4-1 9 1 13M16 3c2 4 1 7 0 11" fill="none" stroke="#2d4767"/></symbol>
<symbol id="pga" viewBox="0 0 24 24"><g transform="scale(.8)"><use href="#pg"/></g><use href="#b-add"/></symbol>
<symbol id="wms" viewBox="0 0 24 24"><use href="#globe"/></symbol>
<symbol id="wmsa" viewBox="0 0 24 24"><use href="#globe"/><use href="#b-add"/></symbol>
<symbol id="wcs" viewBox="0 0 24 24"><use href="#globe-dark"/></symbol>
<symbol id="wcsa" viewBox="0 0 24 24"><use href="#globe-dark"/><use href="#b-add"/></symbol>
<symbol id="wfs" viewBox="0 0 24 24"><use href="#globe-lines"/><g transform="translate(3 4) scale(.8)"><use href="#nodes-v"/></g></symbol>
<symbol id="wfsa" viewBox="0 0 24 24"><use href="#wfs"/><use href="#b-add"/></symbol>
<symbol id="ows" viewBox="0 0 24 24"><use href="#globe-lines"/></symbol>
<symbol id="ams" viewBox="0 0 24 24"><use href="#globe"/><circle cx="7" cy="17" r="6.500" fill="#fff"/><circle cx="7" cy="17" r="5.500" fill="#4a637e"/><path d="M3 15l4-1 1 3-3 3zM9 17l3 0-1 3z" fill="#dfe9f5"/></symbol>
<symbol id="afs" viewBox="0 0 24 24"><use href="#globe-lines"/><circle cx="7" cy="17" r="6.500" fill="#fff"/><circle cx="7" cy="17" r="5.500" fill="#4a637e"/><path d="M7 3l4 1-1 4-4 2zM15 5l3 1 1 5-3 3-2-4z" fill="#33506f"/><path d="M3 15l4-1 1 3-3 3z" fill="#dfe9f5"/></symbol>

<symbol id="star" viewBox="0 0 24 24"><path d="M12 1l3.200 7.500 8 .7-6 5.300 1.800 8L12 18.300 5 22.500l1.800-8-6-5.300 8-.7z" fill="#fdf26b" stroke="#d0a911" stroke-width="1.500"/></symbol>
<symbol id="book" viewBox="0 0 24 24"><path d="M4 1.500h18v18H6z" fill="#d8d8d8" stroke="#aaa"/><path d="M4 1.500c2 0 3 2 3 4v13c0 4-5.500 4-5.500 0V4c0-1.500 1-2.500 2.500-2.500z" fill="#eee" stroke="#999"/><path d="M13 1h4v10l-2-2-2 2z" fill="#6590c4"/></symbol>
<symbol id="home" viewBox="0 0 24 24"><path d="M2 3.500h8l2 3h10.500v15.500H2z" fill="#f2f2f2" stroke="#888" stroke-width="1.300"/><path d="M7 14l5.500-5.500L18 14h-2v5h-7v-5z" fill="#fff" stroke="#333" stroke-width="1.500"/></symbol>
<symbol id="folder" viewBox="0 0 24 24"><path d="M2 3.500h8l2 3h10.500v15.500H2z" fill="#eee" stroke="#888" stroke-width="1.300"/></symbol>
<symbol id="mssql" viewBox="0 0 24 24"><path d="M2 1c8 2 15 2 21 8v8c-8-1-14 0-21 5 5-7 5-14 0-21z" fill="#5e8cc3" stroke="#33506f"/><path d="M8 3c3 5 3 10 0 16M14 4c2 5 2 8 0 13M19 6c1 4 1 7 0 11" fill="none" stroke="#33506f" stroke-width="1.200"/></symbol>
<symbol id="db2" viewBox="0 0 24 24"><rect width="24" height="24" rx="3" fill="#6b97cd"/><text x="2" y="16" font-family="DejaVu Sans" font-size="9.500" textLength="20" fill="#e6eef8">DB2</text></symbol>
<symbol id="vt" viewBox="0 0 24 24"><path d="M2 2h20v20H2z" fill="#8fb0da"/><path d="M2 2h20v20H2zM2 8.500h20M2 15.500h20M8.500 2v20M15.500 2v20" fill="none" stroke="#33455c" stroke-width="2"/></symbol>
<symbol id="xyz" viewBox="0 0 24 24"><path d="M2 2h5.500v5.500H2zM9.300 2h5.500v5.500H9.300zM16.600 2h5.500v5.500h-5.500zM2 9.300h5.500v5.500H2zM9.300 9.300h5.500v5.500H9.300zM16.600 9.300h5.500v5.500h-5.500zM2 16.600h5.500v5.500H2zM9.300 16.600h5.500v5.500H9.300zM16.600 16.600h5.500v5.500h-5.500z" fill="#6b9bd6"/></symbol>
<symbol id="gnode" viewBox="0 0 24 24"><path d="M12 3v18M4 7.500l16 9M4 16.500l16-9" stroke="#5b81ae" stroke-width="5" stroke-linecap="round"/></symbol>
<symbol id="q" viewBox="0 0 24 24"><circle cx="11.500" cy="11.500" r="8.800" fill="none" stroke="url(#gy)" stroke-width="4.400"/><path d="M12.500 13l4-1 6.500 10h-6z" fill="#5f9c35" stroke="#fff" stroke-width=".8"/><circle cx="12" cy="11.500" r="2.400" fill="#ee7d2b"/><path d="M12.500 12l4 4" stroke="#f4e24a" stroke-width="1.500"/></symbol>
<symbol id="gdal" viewBox="0 0 24 24"><circle cx="14" cy="11" r="9" fill="#62bfe2"/><path d="M10 7l6-2 3 4-4 4-4-2z" fill="#47854b"/><path d="M1 6l9-5M4 8l4-6M2 2l6 4" stroke="#555" stroke-width="2"/><text x="0" y="23.500" font-family="DejaVu Sans" font-weight="bold" font-size="11" textLength="24" lengthAdjust="spacingAndGlyphs" fill="#000">GDAL</text></symbol>
<symbol id="grass" viewBox="0 0 24 24"><path d="M12 1l9 10-9 9-9-9z" fill="#fafafa" stroke="#888"/><path d="M3 15l9 7 9-7" fill="none" stroke="#aaa"/><path d="M12 20C11 13 8 9 5 8M12 20c0-8 0-11 1-15M12 20c1-6 4-10 7-11M12 20c-2-3-4-5-6-5" fill="none" stroke="#4ba04c" stroke-width="1.800"/></symbol>
<symbol id="saga" viewBox="0 0 24 24"><path d="M21 6A10 10 0 1 0 21 18" fill="none" stroke="#1a5fa0" stroke-width="3"/><path d="M20 5c-5-2-12 0-9 4s9 4 10 8-6 4-8 1M2 12h9M14 10h9M12 15h11" fill="none" stroke="#1a5fa0" stroke-width="2.200"/></symbol>

<symbol id="addsel" viewBox="0 0 24 24"><path d="M1.500 2h18v17h-18z" fill="#f2f2f2" stroke="#7c8279" stroke-width="1.300"/><circle cx="18.500" cy="19.500" r="4.500" fill="#6aa264"/><path d="M18.500 17v5M16 19.500h5" stroke="#fff" stroke-width="1.500"/></symbol>
<symbol id="remlay" viewBox="0 0 24 24"><path d="M1.500 2h18v18h-18z" fill="#f2f2f2" stroke="#7c8279" stroke-width="1.300"/><rect x="13.500" y="15" width="9.500" height="8" rx="2.500" fill="#e8484d"/><path d="M15.500 19h5.500" stroke="#fff" stroke-width="1.800"/></symbol>
<symbol id="filter" viewBox="0 0 24 24"><path d="M2 3h20v3l-7 7v9l-5 1V13L2 6z" fill="#5e8cc3" stroke="#456a98"/><path d="M1.500 1.500h21v4h-21z" fill="#fce94f" stroke="#c9b01c"/></symbol>
<symbol id="coll" viewBox="0 0 24 24"><path d="M3 3v18h5M3 11h5M3 3h8" fill="none" stroke="#777" stroke-width="1.500"/><path d="M7 9h4v4H7zM7 18h4v4H7z" fill="#fff" stroke="#f08a1d" stroke-width="1.800"/><path d="M17 1l6 8h-3.500v13h-5V9H11z" fill="#5e8cc3" stroke="#33506f"/></symbol>
<symbol id="expa" viewBox="0 0 24 24"><path d="M3 3v18h5M3 11h5M1 3h9" fill="none" stroke="#777" stroke-width="1.500"/><path d="M7 9h4v4H7zM7 18h4v4H7z" fill="#fff" stroke="#f08a1d" stroke-width="1.800"/><path d="M17 22l6-8h-3.500V1h-5v13H11z" fill="#5e8cc3" stroke="#33506f"/></symbol>
<symbol id="info" viewBox="0 0 24 24"><circle cx="12" cy="12" r="10" fill="#6a98d1" stroke="#7a9dc6" stroke-width="1.500"/><text x="8.500" y="18" font-family="DejaVu Serif" font-style="italic" font-weight="bold" font-size="16" fill="#fff">i</text></symbol>
<symbol id="brush" viewBox="0 0 24 24"><path d="M15 10l7-8" stroke="#d5543c" stroke-width="3" stroke-linecap="round"/><path d="M2 12l8-4 7 5-4 8c-4 0-7-1-8-4z" fill="#f3c33c" stroke="#c28a17"/><path d="M9 8l8 7 1-4-4-4z" fill="#cf4533"/></symbol>
<symbol id="group" viewBox="0 0 24 24"><path d="M7.500 3.500h13v14M4.500 6.500h13v14M1.500 9.500h13v13h-13z" fill="none" stroke="#777" stroke-width="1.200"/><path d="M10 15V3c3-3 5 0 4 3v12" fill="none" stroke="#345" stroke-width="1.500"/><circle cx="19" cy="19.500" r="4.500" fill="#6aa264"/><path d="M19 17v5M16.500 19.500h5" stroke="#fff" stroke-width="1.500"/></symbol>
<symbol id="eye" viewBox="0 0 24 24"><path d="M1 12C7 3 17 3 23 12c-6 7-16 7-22 0z" fill="#fff" stroke="#888" stroke-width="1.300"/><path d="M2 7c6-7 14-6 20 0" fill="none" stroke="#888"/><circle cx="12" cy="11.500" r="5" fill="#5e8cc3" stroke="#345"/><circle cx="12" cy="11.500" r="2" fill="#222"/><path d="M17 19h7l-3.500 4z" fill="#333"/></symbol>
<symbol id="eps" viewBox="0 0 24 24"><text x="1" y="15" font-family="DejaVu Serif" font-size="22" fill="#777">ε</text><path d="M13 22v-7h7v7" fill="none" stroke="#888" stroke-width="3"/></symbol>
<symbol id="gears" viewBox="0 0 24 24"><path d="M8 1v14M1 8h14M3 3l10 10M13 3L3 13" stroke="#cc2a2a" stroke-width="2.800"/><circle cx="8" cy="8" r="1.800" fill="#fff"/><path d="M18 8v10M13 13h10M14.500 9.500l7 7M21.500 9.500l-7 7" stroke="#777" stroke-width="2"/><circle cx="12" cy="19" r="3.500" fill="#aac3ea" stroke="#8baada" stroke-dasharray="1.500 1" stroke-width="2"/><path d="M18 20h6l-3 4z" fill="#333"/></symbol>
<symbol id="pym" viewBox="0 0 24 24"><use href="#py"/><path d="M17 20h7l-3.500 4z" fill="#333"/></symbol>
<symbol id="doc" viewBox="0 0 24 24"><path d="M4 1.500h11l6 6v15H4z" fill="#f4f4f4" stroke="#999" stroke-width="1.500"/><path d="M15 1.500v6h6" fill="none" stroke="#999"/><path d="M7 8h6M7 11.500h11M7 15h11M7 18.500h11" stroke="#8a8a8a" stroke-width="1.600"/></symbol>
<symbol id="editm" viewBox="0 0 24 24"><path d="M2 2h14v14H2z" fill="#a59d78"/><path d="M12 22l2-6 7-10 3 2-7 11z" fill="#aaa" stroke="#999"/></symbol>
<symbol id="wrench" viewBox="0 0 24 24"><path d="M3 2l4 4-2 3-4-3c0 5 4 7 7 6l3 3 4-4-3-3c1-3-1-7-6-8z" fill="#f1f1f1" stroke="#777" stroke-width="1.200"/><path d="M13 13l9 9" stroke="#7b6a20" stroke-width="4.500" stroke-linecap="round"/><path d="M13 13l9 9" stroke="#f3d264" stroke-width="3"/></symbol>
<symbol id="mag" viewBox="0 0 24 24"><circle cx="10" cy="9.500" r="7.500" fill="none" stroke="#8a8a8a" stroke-width="1.800"/><path d="M15 15l7.500 7.500" stroke="#8a8a8a" stroke-width="1.800"/></symbol>
<symbol id="float" viewBox="0 0 12 12"><rect x=".7" y=".7" width="10.600" height="10.600" rx="2" fill="none" stroke="#666"/><rect x="3" y="5" width="4" height="4" fill="none" stroke="#666"/><path d="M5 4.500V3h4v4H7.500" fill="none" stroke="#666"/></symbol>
<symbol id="close" viewBox="0 0 12 12"><rect x=".7" y=".7" width="10.600" height="10.600" rx="2" fill="none" stroke="#666"/><path d="M3.500 3.500l5 5M8.500 3.500l-5 5" stroke="#444" stroke-width="1.800"/></symbol>
<symbol id="mouse" viewBox="0 0 24 24"><path d="M4 3l5-2 8 8 3 8-4 5-6-2z" fill="#eee" stroke="#222" stroke-width="1.500"/><path d="M2 6l8 12M6 3l9 12M10 2l8 12M2 12l5 3M17 7l6-6M1 18l5-2M13 8l-6 6M16 12l-6 6" stroke="#222" stroke-width="1.500"/><circle cx="15" cy="17" r="3" fill="#fff" stroke="#222"/></symbol>
<symbol id="lock" viewBox="0 0 24 24"><path d="M5.500 12V8c0-8 13-8 13 0v4" fill="none" stroke="#888" stroke-width="2.200"/><rect x="2" y="11" width="20" height="12.500" rx="1.500" fill="#555"/><path d="M3 15h18M3 19h18" stroke="#777"/></symbol>
<symbol id="crs" viewBox="0 0 24 24"><path d="M12 2c-8 0-11 8-11 11h22c0-3-3-11-11-11zM5 15h14l-7 8z" fill="#ccc" stroke="#666" stroke-width="1.200"/><path d="M1 9h22M3 13h18M5 17h14M12 2v21M7 4c-3 5-2 9 1 14M17 4c3 5 2 9-1 14" fill="none" stroke="#555" stroke-width="1.300"/></symbol>
<symbol id="msg" viewBox="0 0 24 24"><path d="M6 1h12c4 0 5 4 5 8.500S22 18 19 18l1 5-7-5H6c-4 0-5-4-5-8.500S2 1 6 1z" fill="#606060"/><g fill="#fff"><circle cx="7" cy="9.500" r="1.700"/><circle cx="12" cy="9.500" r="1.700"/><circle cx="17" cy="9.500" r="1.700"/></g></symbol>
<symbol id="plug" viewBox="0 0 24 20"><path d="M2 7h5c-2-6 6-6 5 0h5v4c4-2 4 5 0 4v4H2v-4c4 1 4-5 0-4z" fill="#c4c4c4" stroke="#666"/><path d="M2 7l14 12M16 7L3 19M14 8c3-1 2-5 6-5 3 0 3 6-2 6" fill="none" stroke="#666" stroke-width="1.300"/></symbol>
</defs>
</svg>

<div class="window">
<header class="titlebar"><span class="title">Projeto sem título — QGIS</span><span class="wbtns"><i class="min"></i><svg class="x" viewBox="0 0 20 20"><circle cx="10" cy="10" r="9.500" fill="#f68b28"/><path d="M7 7l6 6M13 7l-6 6" stroke="#fff" stroke-width="2"/></svg></span></header>
<nav class="menu"><span>Pro<u>j</u>eto</span><span><u>E</u>ditar</span><span><u>V</u>isão</span><span><u>C</u>amada</span><span><u>C</u>onfigurações</span><span><u>C</u>omplementos</span><span>Vet<u>o</u>r</span><span><u>R</u>aster</span><span><u>B</u>ase de dados</span><span><u>W</u>eb</span><span><u>M</u>alha</span><span>Pro<u>c</u>essar</span><span><u>A</u>juda</span></nav>

<div class="bar">
<i class="h"></i><b><svg><use href="#new"/></svg></b><b><svg><use href="#open"/></svg></b><b><svg><use href="#save"/></svg></b><b><svg><use href="#layout"/></svg></b><b><svg><use href="#layoutm"/></svg></b><b><svg><use href="#style"/></svg></b>
<i class="h"></i><b class="on"><svg><use href="#hand"/></svg></b><b><svg><use href="#move"/></svg></b><b><svg><use href="#zin"/></svg></b><b><svg><use href="#zout"/></svg></b><b><svg><use href="#zfull"/></svg></b><b><svg><use href="#zsel"/></svg></b><b class="off"><svg><use href="#zlay"/></svg></b><b class="off"><svg><use href="#z11"/></svg></b><b class="off"><svg><use href="#zlast"/></svg></b><b class="off"><svg><use href="#znext"/></svg></b><b><svg><use href="#map"/></svg></b><b><svg><use href="#map3d"/></svg></b><b><svg><use href="#bmnew"/></svg></b><b><svg><use href="#bm"/></svg></b><b><svg><use href="#clock"/></svg></b><b><svg><use href="#refresh"/></svg></b>
<i class="h"></i><b class="off"><svg><use href="#ident"/></svg></b><b class="off"><svg><use href="#table"/></svg></b><b class="off"><svg><use href="#abacus"/></svg></b><b class="on"><svg><use href="#gear"/></svg></b><b><svg><use href="#sum"/></svg></b><b><svg><use href="#ruler"/></svg></b><i class="a"></i><b><svg><use href="#tip"/></svg></b><b class="off"><svg><use href="#gearact"/></svg></b><i class="a off"></i><b><svg><use href="#textann"/></svg></b><i class="a"></i>
<i class="h"></i><b class="off"><svg><use href="#select"/></svg></b><i class="a off"></i><b class="off"><svg><use href="#form"/></svg></b><i class="a off"></i><b><svg><use href="#desel"/></svg></b><i class="a"></i><b><svg><use href="#selloc"/></svg></b>
</div>

<div class="bar">
<i class="h"></i><b><svg><use href="#dsm"/></svg></b><b><svg><use href="#gpkgn"/></svg></b><b><svg><use href="#shpn"/></svg></b><b><svg><use href="#feathern"/></svg></b><b><svg><use href="#chip"/></svg></b><i class="s"></i><b><svg><use href="#virtn"/></svg></b><i class="s"></i>
<i class="h"></i><b class="off"><svg><use href="#pencils"/></svg></b><b class="off"><svg><use href="#pencil"/></svg></b><b class="off"><svg><use href="#saveed"/></svg></b><b class="off"><svg><use href="#ptsn"/></svg></b><b class="off"><svg><use href="#vertex"/></svg></b><i class="a off"></i><b class="off"><svg><use href="#attr"/></svg></b><b class="off"><svg><use href="#trash"/></svg></b><b class="off"><svg><use href="#cut"/></svg></b><b class="off"><svg><use href="#copy"/></svg></b><b class="off"><svg><use href="#paste"/></svg></b><b class="off"><svg><use href="#undo"/></svg></b><b class="off"><svg><use href="#redo"/></svg></b>
<i class="h"></i><b class="off"><svg><use href="#abc"/></svg></b><b class="off"><svg><use href="#pie"/></svg></b><i class="s"></i><b><svg><use href="#abpin"/></svg></b><b><svg><use href="#abcr"/></svg></b><i class="s"></i><b class="off"><svg><use href="#abpin2"/></svg></b><b class="off"><svg><use href="#abeye"/></svg></b><b class="off"><svg><use href="#abmove"/></svg></b><b class="off"><svg><use href="#abrot"/></svg></b><b class="off"><svg><use href="#abedit"/></svg></b>
<i class="h"></i><b><svg><use href="#db"/></svg></b>
<i class="h"></i><b><svg><use href="#cswa"/></svg></b><b><svg><use href="#csws"/></svg></b><b><svg><use href="#bino"/></svg></b>
<i class="h"></i><b><svg><use href="#pyc"/></svg></b>
<i class="h"></i><b><svg><use href="#help"/></svg></b>
<i class="h"></i><i class="h"></i><b><svg><use href="#touch"/></svg></b>
</div>

<div class="bar">
<i class="h"></i><b class="off"><svg><use href="#curve"/></svg></b><b class="off"><svg><use href="#setsq"/></svg></b><b class="off"><svg><use href="#ptsm"/></svg></b><i class="a off"></i><b class="off"><svg><use href="#frot"/></svg></b><b class="off"><svg><use href="#simp"/></svg></b><b class="off"><svg><use href="#ringn"/></svg></b><b class="off"><svg><use href="#partn"/></svg></b><b class="off"><svg><use href="#ringn"/></svg></b><b class="off"><svg><use href="#ringd"/></svg></b><b class="off"><svg><use href="#partd"/></svg></b><b class="off"><svg><use href="#reshape"/></svg></b><b class="off"><svg><use href="#offset"/></svg></b><b class="off"><svg><use href="#vrot"/></svg></b><b class="off"><svg><use href="#trim"/></svg></b><b class="off"><svg><use href="#scis"/></svg></b><b class="off"><svg><use href="#scis"/></svg></b><b class="off"><svg><use href="#merge"/></svg></b><b class="off"><svg><use href="#mattr"/></svg></b><b class="off"><svg><use href="#rsym"/></svg></b><i class="a off"></i>
<i class="h"></i><b class="off"><svg><use href="#hist"/></svg></b><b class="off"><svg><use href="#hista"/></svg></b><b class="off"><svg><use href="#hist"/></svg></b><b class="off"><svg><use href="#hista"/></svg></b><b class="off"><svg><use href="#sunu"/></svg></b><b class="off"><svg><use href="#sund"/></svg></b><b class="off"><svg><use href="#conu"/></svg></b><b class="off"><svg><use href="#cond"/></svg></b><b class="off"><svg><use href="#gamu"/></svg></b><b class="off"><svg><use href="#gamd"/></svg></b>
</div>

<div class="bar last">
<i class="h"></i><b class="off"><svg><use href="#curven"/></svg></b><i class="a off"></i><b class="off"><svg><use href="#circn"/></svg></b><i class="a off"></i><b class="off"><svg><use href="#elln"/></svg></b><i class="a off"></i><b class="off"><svg><use href="#rectn"/></svg></b><i class="a off"></i><b class="off"><svg><use href="#polyn"/></svg></b><i class="a off"></i>
<i class="h"></i><b><svg><use href="#magnet"/></svg></b><b class="off sub"><svg><use href="#snapv"/></svg></b><b class="on dis sub"><svg><use href="#snapp"/></svg></b><span class="spin dis"><span>12</span><em></em></span><span class="combo dis"><span>px</span><i class="a off"></i></span><b><svg><use href="#topo"/></svg></b><b class="sub"><svg><use href="#overlap"/></svg></b><b class="off"><svg><use href="#inter"/></svg></b><b class="off"><svg><use href="#self"/></svg></b><i class="a off"></i><b class="off"><svg><use href="#tracep"/></svg></b>
</div>

<div class="main">
<aside class="rail">
<i class="hh"></i>
<div><b><svg><use href="#shpa"/></svg></b></div><div><b><svg><use href="#raster"/></svg></b></div><div><b><svg><use href="#mesh"/></svg></b></div><div><b><svg><use href="#comma"/></svg></b></div><div><b><svg><use href="#feathera"/></svg></b></div><div><b><svg><use href="#virta"/></svg></b></div><div><b><svg><use href="#pga"/></svg></b><i class="a"></i></div><div><b><svg><use href="#wmsa"/></svg></b><i class="a"></i></div><div><b><svg><use href="#wcsa"/></svg></b></div><div><b><svg><use href="#wfsa"/></svg></b><i class="a"></i></div><div><b><svg><use href="#shpn"/></svg></b><i class="a"></i></div>
</aside>

<section class="left">
<div class="dock nav">
<h2>Navegador<span><svg><use href="#float"/></svg><svg><use href="#close"/></svg></span></h2>
<div class="tools"><svg><use href="#addsel"/></svg><svg><use href="#refresh"/></svg><svg><use href="#filter"/></svg><svg><use href="#coll"/></svg><svg><use href="#info"/></svg></div>
<ul class="tree">
<li><i></i><svg><use href="#star"/></svg>Favoritos</li>
<li><i class="c"></i><svg><use href="#book"/></svg>Favoritos Espaciais</li>
<li><i class="c"></i><svg><use href="#home"/></svg>Início</li>
<li><i class="c"></i><svg><use href="#folder"/></svg>/</li>
<li><i></i><svg><use href="#gpkg"/></svg>GeoPackage</li>
<li><i></i><svg><use href="#feather"/></svg>SpatiaLite</li>
<li><i></i><svg><use href="#pg"/></svg>PostGIS</li>
<li><i></i><svg><use href="#mssql"/></svg>MSSQL</li>
<li><i></i><svg><use href="#db2"/></svg>DB2</li>
<li><i></i><svg><use href="#wms"/></svg>WMS/WMTS</li>
<li><i></i><svg><use href="#vt"/></svg>Vector Tiles</li>
<li><i class="o"></i><svg><use href="#xyz"/></svg>XYZ Tiles</li>
<li class="child"><i></i><svg><use href="#xyz"/></svg>OpenStreetMap</li>
<li><i></i><svg><use href="#wcs"/></svg>WCS</li>
<li><i></i><svg><use href="#wfs"/></svg>WFS / OGC API - Features</li>
<li><i></i><svg><use href="#ows"/></svg>OWS</li>
<li><i></i><svg><use href="#ams"/></svg>Servidor de mapa do ArcGIS</li>
<li><i></i><svg><use href="#gnode"/></svg>GeoNode</li>
<li><i></i><svg><use href="#afs"/></svg>Servidor de feição do ArcGIS</li>
</ul>
</div>
<i class="split"></i>
<div class="dock lay">
<h2>Camadas<span><svg><use href="#float"/></svg><svg><use href="#close"/></svg></span></h2>
<div class="tools"><svg><use href="#brush"/></svg><svg><use href="#group"/></svg><svg><use href="#eye"/></svg><svg><use href="#filter"/></svg><svg class="off"><use href="#eps"/></svg><i class="a off"></i><svg><use href="#expa"/></svg><svg><use href="#coll"/></svg><svg><use href="#remlay"/></svg></div>
<div class="tree"></div>
</div>
</section>
<i class="vsplit"></i>

<main class="center">
<i class="split top"></i>
<h1>Projeção modelo</h1>
<div class="canvas">
<article><div class="thumb"><svg viewBox="0 0 212 139"><rect x=".5" y=".5" width="211" height="138" fill="none" stroke="#ccc" stroke-dasharray="4 2"/></svg></div><div class="desc"><h3>Novo Projeto Vazio</h3><p>EPSG:4326 - WGS 84</p></div></article>
</div>
</main>
<i class="vsplit r"></i>

<section class="right dock">
<h2>Caixa de Ferramentas de processamento<span><svg><use href="#float"/></svg><svg><use href="#close"/></svg></span></h2>
<div class="tools"><svg><use href="#gears"/></svg><svg><use href="#pym"/></svg><svg><use href="#clockg"/></svg><svg><use href="#doc"/></svg><i class="s"></i><svg class="off"><use href="#editm"/></svg><i class="s"></i><svg><use href="#wrench"/></svg></div>
<div class="search"><svg><use href="#mag"/></svg>Buscar...</div>
<ul class="tree">
<li><i class="c"></i><svg><use href="#clockg"/></svg>Usado recentemente</li>
<li><i class="c"></i><svg><use href="#q"/></svg>Análise de dados Raster</li>
<li><i class="c"></i><svg><use href="#q"/></svg>Análise de rede</li>
<li><i class="c"></i><svg><use href="#q"/></svg>Análise vetorial</li>
<li><i class="c"></i><svg><use href="#q"/></svg>Banco de dados</li>
<li><i class="c"></i><svg><use href="#q"/></svg>Cartografia</li>
<li><i class="c"></i><svg><use href="#q"/></svg>Criação de raster</li>
<li><i class="c"></i><svg><use href="#q"/></svg>Criação de vetor</li>
<li><i class="c"></i><svg><use href="#q"/></svg>Ferramentas de arquivo</li>
<li><i class="c"></i><svg><use href="#q"/></svg>Ferramentas de camada</li>
<li><i class="c"></i><svg><use href="#q"/></svg>Ferramentas raster</li>
<li><i class="c"></i><svg><use href="#q"/></svg>Geometria do vetor</li>
<li><i class="c"></i><svg><use href="#q"/></svg>Interpolar</li>
<li><i class="c"></i><svg><use href="#q"/></svg>Malha</li>
<li><i class="c"></i><svg><use href="#q"/></svg>Mosaico vetor</li>
<li><i class="c"></i><svg><use href="#q"/></svg>Plotar</li>
<li><i class="c"></i><svg><use href="#q"/></svg>Raster de análise do terreno</li>
<li><i class="c"></i><svg><use href="#q"/></svg>Selecionar vetor</li>
<li><i class="c"></i><svg><use href="#q"/></svg>Sobreposição de vetor</li>
<li><i class="c"></i><svg><use href="#q"/></svg>Tabela de vetores</li>
<li><i class="c"></i><svg><use href="#q"/></svg>Vetor geral</li>
<li><i class="c"></i><svg><use href="#gdal"/></svg>GDAL</li>
<li><i class="c"></i><svg><use href="#grass"/></svg>GRASS</li>
<li><i class="c"></i><svg><use href="#saga"/></svg>SAGA</li>
</ul>
</section>
</div>

<footer class="status">
<div class="locator"><svg><use href="#mag"/></svg>Escreva para localizar (Ctrl+K)</div>
<div class="fields">
<label class="coord">Coordenada</label><span class="inp"></span><svg><use href="#mouse"/></svg>
<label class="esc">Escala</label><span class="combo"><span>1:1</span><i class="a"></i></span>
<svg class="lock"><use href="#lock"/></svg>
<label class="lupa">Lupa</label><span class="spin mg"><span>100%</span><em></em></span>
<label class="rot">Rotação</label><span class="spin rt"><span>0.0 °</span><em></em></span>
<span class="check"><svg viewBox="0 0 13 13"><path d="M3 6.500l2.500 4 4-8.500" fill="none" stroke="#000" stroke-width="2"/></svg></span><label class="ren">Renderizar</label>
<svg class="crs"><use href="#crs"/></svg><label class="epsg">EPSG:4326</label>
<svg class="msg"><use href="#msg"/></svg><svg class="plug"><use href="#plug"/></svg>
</div>
</footer>

<svg class="callout" viewBox="0 0 180 140"><rect x="135.300" y="2.800" width="41.300" height="43.200" fill="none" stroke="#800080" stroke-width="3"/><path d="M1.500 136.500L126 48" stroke="#800080" stroke-width="3"/><path d="M142.700 36.700L129.700 55.700 119.300 42.300z" fill="#800080"/></svg>
</div>
</body>
</html>
```
FILE: styles.css
```css
* { box-sizing: border-box; }
body { margin: 0; font: 13px/19px "DejaVu Sans", sans-serif; color: #111; background: #efefef; }
.defs { position: absolute; width: 0; height: 0; }
h1, h2, h3, p, ul { margin: 0; padding: 0; font-weight: normal; }
.window { position: relative; width: 1850px; height: 1050px; display: flex; flex-direction: column; overflow: hidden; }

.titlebar { height: 34px; flex: none; display: grid; grid-template-columns: 1fr auto 1fr; align-items: center; background: #353535; border-bottom: 1px solid #222; color: #f2f2f2; }
.title { grid-column: 2; font: bold 13px/20px "Noto Sans", "Open Sans", sans-serif; letter-spacing: -.55px; padding-bottom: 3px; }
.wbtns { display: flex; justify-content: flex-end; align-items: center; gap: 20px; padding: 0 8px 3px 0; }
.min { width: 8px; height: 2px; background: #eee; margin-top: 7px; }
.wbtns .x { width: 20px; height: 20px; }

.menu { height: 22px; flex: none; display: flex; padding-left: 1.500px; border-bottom: 1px solid #d4d4d4; line-height: 21px; }
.menu span { padding: 0 7.600px; }
.menu u { text-underline-offset: 2px; text-decoration-skip-ink: none; }

.bar { height: 39px; flex: none; display: flex; align-items: center; padding-right: 5px; border-bottom: 1px solid #b4b4b4; background: linear-gradient(#f9f9f9, #ececec); }
.bar.last { height: 38px; padding-top: 1px; }
.bar > .h:first-child { margin-left: -4.500px; }
.bar .h + .h { margin-left: 1.500px; }
.h { width: 16px; height: 17px; flex: none; background: radial-gradient(circle at 1px 1px, #bbb .7px, transparent 1px) 8.500px 0 / 3.500px 3px; clip-path: inset(0 2.500px 0 8.500px); }
b { width: 33px; height: 33px; flex: none; display: flex; align-items: center; justify-content: center; position: relative; font-weight: normal; }
b svg { width: 24px; height: 24px; overflow: visible; }
.off > svg, svg.off, .dis > svg { opacity: .33; filter: grayscale(.5); }
.on::before { content: ""; position: absolute; inset: 1px .500px 1px 1px; border: 1px solid #b0b0b0; border-radius: 2px; background: #dcdcdc; }
.on.dis::before { background: #d6d6d6; border-color: #c2c2c2; }
.on svg { position: relative; }
.a { width: 12px; height: 8px; flex: none; display: flex; align-items: center; justify-content: center; }
.a::before, .sub::after { content: ""; border: 3.500px solid transparent; border-top: 4px solid #555; border-bottom: 0; }
.bar > .a { padding-right: 1.500px; }
.a.off::before { border-top-color: #c2c2c2; }
.sub::after { position: absolute; right: 1px; bottom: 5px; border-width: 3px 3px 0; }
.off.sub::after, .dis.sub::after { border-top-color: #bbb; }
.s { width: 7px; height: 19px; flex: none; background: linear-gradient(#d0d0d0, #d0d0d0) 4px 0 / 1px 100% no-repeat; }

.spin, .combo, .inp, .locator, .search { border: 1px solid #b0b0b0; border-radius: 3px; background: #fff; }
.spin, .combo { display: flex; align-items: center; padding-left: 4px; flex: none; }
.spin > span, .combo > span { flex: 1; }
.spin em { align-self: stretch; width: 14px; border-left: 1px solid #b8b8b8; display: flex; flex-direction: column; align-items: center; justify-content: center; gap: 5px; border-radius: 0 3px 3px 0; background: linear-gradient(#fcfcfc, #ededed); }
.spin em::before, .spin em::after { content: ""; border: 3.500px solid transparent; border-bottom: 4px solid #666; border-top: 0; }
.spin em::after { border-top: 4px solid #666; border-bottom: 0; }
.bar .spin { width: 103px; height: 23px; background: #efefef; color: #aaa; border-color: #bcbcbc; }
.bar .spin em::before { border-bottom-color: #c2c2c2; }
.bar .spin em::after { border-top-color: #c2c2c2; }
.bar .combo { width: 66px; height: 25px; margin-left: 1px; color: #aaa; background: #f8f8f8; padding-right: 5px; border-color: #c2c2c2; }

.main { flex: none; height: 808px; display: flex; }
.rail { width: 51px; flex: none; background: linear-gradient(90deg, #f8f8f8, #ececec); border-right: 1px solid #aaa; display: flex; flex-direction: column; padding-top: 6px; }
.hh { height: 6.500px; margin-left: 17px; width: 17px; background: radial-gradient(circle at 1px 1px, #bbb .7px, transparent 1px) 0 0 / 3px 3.500px; }
.rail div { height: 32px; display: flex; align-items: center; padding-left: 2.500px; }
.rail .a { margin-left: -1px; }

.left { width: 294px; flex: none; display: flex; flex-direction: column; }
.dock { display: flex; flex-direction: column; }
.dock.nav { height: 443px; }
.dock.lay { flex: 1; }
.dock h2 { height: 22px; flex: none; padding: 0 2px 1px 4px; font-size: 13px; line-height: 20px; display: flex; justify-content: space-between; }
.dock h2 span { display: flex; align-items: center; gap: 3px; }
.dock h2 svg { width: 11px; height: 11px; }
.tools { display: flex; align-items: center; gap: 9px; height: 29px; flex: none; padding: 0 0 3px 8px; }
.tools svg { width: 16px; height: 16px; overflow: visible; flex: none; }
.tools .a { margin: 0 -4px 0 -5px; }
.tools .s { height: 11px; margin: 0 -4.500px; }
.tree { flex: 1; list-style: none; background: #fff; border: 1px solid #b0b0b0; }
.tree li { height: 19px; display: flex; align-items: center; white-space: nowrap; }
.tree li > i { width: 21px; flex: none; padding-left: 8px; }
.tree li > .c::before { content: ""; display: block; border: 4px solid transparent; border-left: 4px solid #555; border-right: 0; }
.tree li > .o::before { content: ""; display: block; margin-left: -1px; width: 0; border: 3.500px solid transparent; border-top: 4px solid #555; border-bottom: 0; }
.tree li svg { width: 16px; height: 16px; margin: 0 6px 0 2px; flex: none; }
.tree .child { padding-left: 20px; }
.split { height: 4px; margin: 1px 0 0 140px; width: 17px; flex: none; background: radial-gradient(circle at 1px 1px, #bbb .7px, transparent 1px) 0 1px / 3px 5px; }
.split.top { height: 3px; margin: 0 0 0 502px; background-position: 0 0; }
.vsplit { width: 10px; flex: none; background: radial-gradient(circle at 1px 1px, #bbb .7px, transparent 1px) 2px 0 / 5px 3px; clip-path: inset(397px 0 393px 0); }
.vsplit.r { width: 6px; }

.center { width: 1020px; flex: none; display: flex; flex-direction: column; }
h1 { height: 39px; flex: none; padding-left: 11px; font: bold 23px/38px "DejaVu Sans", sans-serif; color: #000; }
.canvas { flex: 1; border: 1px solid #b0b0b0; background: #fff; padding: 5px; }
article { height: 187px; width: 1008px; display: flex; gap: 19px; padding: 5px; border-radius: 8px; background: #eee; color: #000; }
.thumb { width: 250px; height: 177px; flex: none; padding: 20px; border-radius: 8px; background: #fff; }
.thumb svg { display: block; width: 211px; height: 138px; }
.desc { padding-top: 8px; }
h3 { font: bold 18px/24px "DejaVu Sans", sans-serif; }
.desc p { font: 16.600px/22px "DejaVu Sans Condensed", "DejaVu Sans", sans-serif; font-stretch: condensed; margin-top: 13px; }

.right { flex: 1; }
.search { height: 25px; flex: none; display: flex; align-items: center; gap: 7px; padding-left: 8px; color: #8b8b8b; }
.search svg, .locator svg { width: 13px; height: 13px; }

.status { flex: 1; display: flex; align-items: center; padding-left: 3px; }
.locator { width: 356px; height: 25px; margin-bottom: 1px; flex: none; display: flex; align-items: center; gap: 7px; padding-left: 8px; color: #858585; border-color: #a8a8a8; }
.fields { flex: 1; display: flex; align-items: center; padding: 2px 2px; font-size: 11px; }
.fields > svg { width: 16px; height: 16px; flex: none; }
.coord { width: 70px; margin-left: 554px; }
.inp { width: 125px; height: 22px; margin-right: 4px; }
.esc { margin-left: 13px; width: 39px; }
.status .combo { width: 97px; height: 25px; padding: 0 0 0 3px; }
.status .combo .a { width: 20px; align-self: stretch; height: auto; border-left: 1px solid #b8b8b8; background: linear-gradient(#fcfcfc, #ededed); }
.fields .lock { margin-left: 10px; width: 15px; }
.lupa { margin-left: 7px; width: 31px; }
.mg { width: 98px; height: 24px; }
.rot { margin-left: 9px; width: 54px; }
.rt { width: 94px; height: 23px; }
.check { width: 14px; height: 14px; margin-left: 6px; border: 1px solid #b0b0b0; background: #fff; display: flex; }
.ren { margin-left: 5px; width: 75px; }
.epsg { margin-left: 2px; width: 84px; }
.fields .plug { margin-left: 12px; width: 23px; height: 19px; }

.callout { position: absolute; left: 729px; top: 51px; width: 180px; height: 140px; pointer-events: none; }
```
